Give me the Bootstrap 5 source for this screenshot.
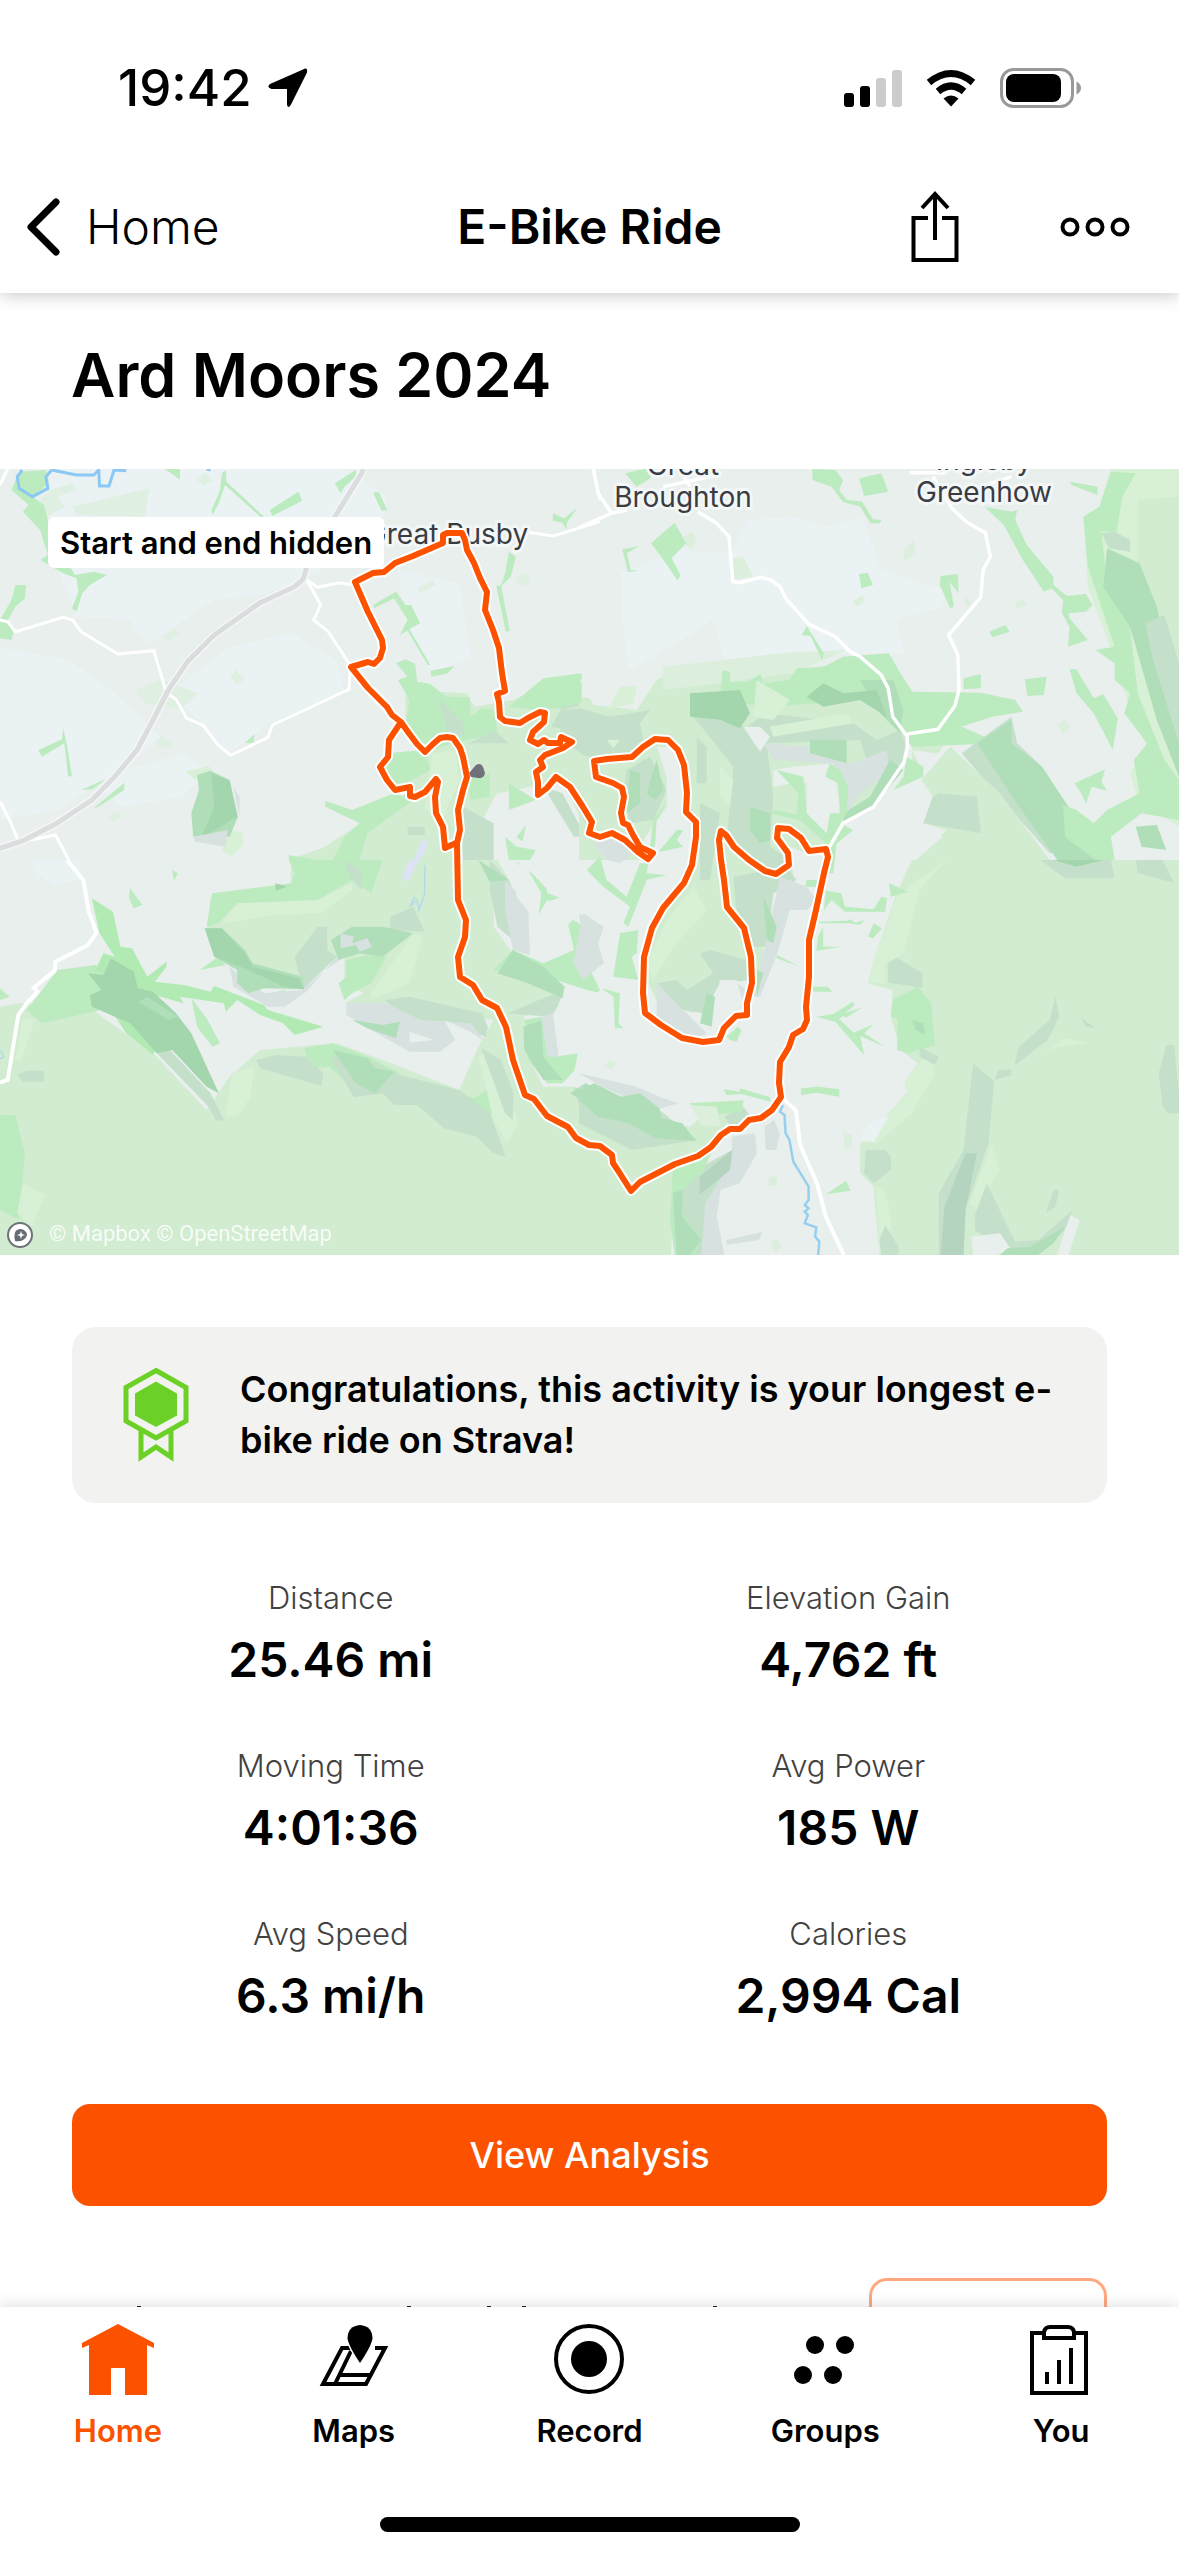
<!DOCTYPE html>
<html lang="en">
<head>
<meta charset="utf-8">
<meta name="viewport" content="width=device-width, initial-scale=1">
<title>E-Bike Ride</title>
<link href="https://cdn.jsdelivr.net/npm/bootstrap@5.3.0/dist/css/bootstrap.min.css" rel="stylesheet">
<style>
  body { font-family: Inter, "Liberation Sans", sans-serif; color: #000; background: #fff; }
  a { color: inherit; text-decoration: none; }
  svg { display: block; flex: none; }
  .app-header { box-shadow: 0 2px 16px rgba(0,0,0,.22); z-index: 2; }
  .status-row { height: 160px; padding: 16px 98px 0 118px; }
  .clock { font-size: 51px; line-height: 56px; font-weight: 500; }
  .top-row { height: 133px; padding: 0 26px; }
  .top-side { flex: 1 1 0; }
  .top-text { font-size: 48px; line-height: 56px; }
  .top-back { gap: 26px; font-weight: 300; }
  .top-name { font-weight: 600; }
  .top-actions { gap: 100px; }
  .top-actions .icon-button:last-child { margin-right: 22px; }
  .icon-button { border: 0; background: none; padding: 0; color: inherit; }
  .ride-title { font-size: 61px; line-height: 72px; font-weight: 600; padding: 46px 71px 58px; }
  .map-area { position: relative; }
  .map-area svg { width: 100%; height: auto; }
  .map-chip { position: absolute; left: 48px; top: 48px; height: 51px; line-height: 51px; padding: 0 12px;
    border-radius: 6px; background: #fff; font-size: 31px; font-weight: 600; }
  .page-body { padding: 72px 72px 0; }
  .congrats { background: #f2f2f0; border-radius: 24px; padding: 37px 48px; gap: 48px; font-size: 36px; line-height: 51px; font-weight: 600; }
  .stats { padding-top: 74px; row-gap: 55px; }
  .stat-label { font-size: 31px; line-height: 42px; font-weight: 300; color: #43423f; }
  .stat-value { font-size: 48px; line-height: 60px; padding-top: 11px; font-weight: 600; }
  .btn-orange { margin-top: 78px; height: 102px; border-radius: 18px; border: 0; background: #fc5200; color: #fff; font-size: 36px; font-weight: 500; }
  .btn-orange:hover { background: #e34a00; color: #fff; }
  .promo { margin-top: 72px; }
  .promo-button { width: 238px; height: 96px; border: 3px solid #ffa880; border-radius: 18px; background: #fff; }
  .tab-bar { box-shadow: 0 -2px 14px rgba(0,0,0,.12); z-index: 2; }
  .tab-link { padding-top: 17px; gap: 15px; font-size: 31px; line-height: 40px; font-weight: 600; }
  .tab-link.current { color: #fc5200; }
  .home-bar { width: 420px; height: 15px; border-radius: 8px; background: #000; margin: 66px auto 24px; }
  .thin path { vector-effect: non-scaling-stroke; }
  .place { font-family: Inter, sans-serif; font-size: 28px; fill: #3a3c44; stroke: #f3f7f7; stroke-width: 6px; paint-order: stroke; stroke-linejoin: round; text-anchor: middle; }
  .credit { font-family: Roboto, sans-serif; font-size: 22px; fill: #fff; fill-opacity: .85; }
  .lt { fill: #ebf2f3; } .pale { fill: #dcefdd; } .meadow { fill: #d1ecd0; } .lawn { fill: #d8f0d6; } .wood { fill: #bcebc0; }
  .bright { fill: #b1ebb3; } .deep { fill: #a4d6ae; } .mid { fill: #b0deb9; } .shade { fill: #c5e0ca; } .stone { fill: #d7e2e0; } .bare { fill: #e8efed; }
</style>
<script src="https://cdn.jsdelivr.net/npm/bootstrap@5.3.0/dist/js/bootstrap.bundle.min.js"></script>
</head>
<body class="vh-100 d-flex flex-column overflow-hidden">

<header class="app-header bg-white position-relative flex-shrink-0">
  <div class="status-row d-flex align-items-center justify-content-between">
    <div class="d-flex align-items-center">
      <span class="clock">19:42</span>
      <svg class="ms-3" width="40" height="40" viewBox="0 0 40 40"><path d="M35 1.500Q40-1.500 39 4.500L23 36.500Q20 41.500 19 36.500V21H3.500Q-2 19.500 2 16Z"/></svg>
    </div>
    <div class="d-flex align-items-center gap-4">
      <svg width="58" height="38" viewBox="0 0 58 38"><rect y="24" width="10" height="14" rx="3"/><rect x="16" y="17" width="10" height="21" rx="3"/><rect x="32" y="9" width="10" height="29" rx="3" fill="#ccc"/><rect x="48" y="1" width="10" height="37" rx="3" fill="#ccc"/></svg>
      <svg width="50" height="38" viewBox="0 0 50 38"><path d="M25 37.500 17.500 29.500Q25 23.500 32.500 29.500Z"/><g fill="none" stroke="#000" stroke-width="7"><path d="M12 22.500Q25 11.500 38 22.500"/><path d="M3 13.500Q25-4.500 47 13.500"/></g></svg>
      <svg width="81" height="40" viewBox="0 0 81 40"><rect x="1.500" y="1.500" width="71" height="37" rx="12" fill="none" stroke="#999" stroke-width="3"/><rect x="6" y="6" width="55" height="28" rx="8"/><path d="M76.500 13.500Q81 16 81 20T76.500 26.500Z" fill="#999"/></svg>
    </div>
  </div>
  <nav class="top-row d-flex align-items-center">
    <div class="top-side d-flex">
      <a href="#" class="top-back top-text d-flex align-items-center">
        <svg width="34" height="58" viewBox="0 0 34 58"><path d="M30 4 5 29 30 54" fill="none" stroke="#000" stroke-width="7" stroke-linecap="round" stroke-linejoin="round"/></svg>
        Home
      </a>
    </div>
    <div class="top-name top-text">E-Bike Ride</div>
    <div class="top-side top-actions d-flex align-items-center justify-content-end">
      <button class="icon-button" aria-label="Share"><svg width="48" height="72" viewBox="0 0 48 72" fill="none" stroke="#000" stroke-width="4"><path d="M17 27H2.500V69H45.500V27H31M24 49V3M11 17 24 3 37 17"/></svg></button>
      <button class="icon-button" aria-label="More"><svg width="72" height="22" viewBox="0 0 72 22" fill="none" stroke="#000" stroke-width="4"><circle cx="11" cy="11" r="7.500"/><circle cx="36" cy="11" r="7.500"/><circle cx="61" cy="11" r="7.500"/></svg></button>
    </div>
  </nav>
</header>

<main class="flex-fill overflow-hidden" style="min-height:0">
  <h1 class="ride-title m-0">Ard Moors 2024</h1>

  <section class="map-area" aria-label="Route map">
    <svg viewBox="0 469 1179 786" role="img" aria-label="Map of the ride">
      <rect y="469" width="1179" height="786" fill="#e8efed"/>

      <!-- north-west fields -->
      <g class="thin" transform="translate(0 460) scale(.38265 .33333)">
        <path class="lt" d="M130 27H900L1010 110 1000 200 830 340 700 400 560 420 380 560 340 480 200 470 150 330 130 180ZM0 560 180 600 300 700 420 830 350 900 150 1050 0 1080ZM440 700 600 560 760 520 880 600 900 690 700 790 600 880 520 780ZM1040 330 1200 370 1230 590 1130 640 1060 500ZM240 960 480 880 540 930 480 1010 320 1040Z"/>
        <path class="pale" d="M190 140 390 85 378 170 200 165ZM515 60 535 38 555 60 535 78ZM428 530 455 505 468 520 438 543ZM602 650 615 630 640 655 620 675ZM408 845 420 828 452 850 440 868 415 860ZM1090 385 1130 360 1140 375 1100 400ZM1350 355 1365 340 1385 350 1380 378 1350 372ZM280 1070 300 1055 318 1070 295 1085ZM130 90 190 70 200 90 150 110 170 140 130 165 90 140ZM355 690 420 660 520 700 470 750 380 730Z" opacity=".8"/>
        <path class="wood" d="M50 35 120 30 128 70 85 110 115 135 130 200 160 270 195 345 245 335 280 345 235 375 215 400 200 455 188 445 205 395 200 355 165 340 120 310 105 300 125 285 105 210 60 155 75 135 30 90ZM430 27H470V60L450 42ZM590 30 592 65 690 170 680 170 588 75 572 130 555 165 553 150 575 90 580 40ZM705 150 780 95 790 122 712 168ZM975 98 990 95 1012 150 997 152ZM40 375 68 375 65 415 40 440 18 485 35 515 30 540 55 560 30 540 0 535V480L30 420ZM165 805 176 860 188 948 178 950 168 850 110 890 100 870 162 838ZM640 850 665 822 662 848ZM212 990 275 958 265 970 240 988ZM245 1045 325 968 325 990 255 1042ZM875 70 930 30 930 50 900 80 890 100ZM975 435 1035 395 1060 435 1075 435 1098 490 1070 508 1125 615 1118 615 1065 512 1045 525 1065 480 1030 415 978 445ZM1125 632 1188 618 1170 640 1128 650ZM1330 275 1348 290 1335 350 1315 372 1310 380 1332 512 1322 515 1297 378 1310 375 1320 340ZM1445 160 1475 175 1510 142 1480 190 1482 210 1470 188 1445 182Z"/>
        <path class="meadow" d="M1060 690 1220 700 1240 740 1340 720 1400 690 1568 720V1000L1480 960 1300 1000 1200 1200H755L850 1160 980 1060 1060 1000 1000 960 1000 900 1060 880Z"/>
        <path class="bare" d="M1060 800 1110 880 1110 870 1010 880 1040 800ZM1290 1010 1400 1060 1450 1050 1540 1200H1290L1280 1100Z"/>
        <path class="wood" d="M1035 610 1060 598 1085 612 1090 665 1125 672 1165 710 1228 712 1230 770 1260 745 1290 750 1300 820 1180 850 1110 880 1060 800 1070 720 1040 660 1065 650ZM1330 740 1420 655 1520 640 1520 740 1400 750ZM1010 880 1110 870 1125 930 1060 970 1005 970ZM850 1022 920 1050 1030 1000 1080 1020 960 1120 940 1200H870L900 1130 940 1090 850 1040ZM1220 960 1280 940 1280 1010 1230 1020ZM1330 970 1400 1020 1330 1050ZM1350 1130 1375 1095 1365 1145ZM1320 1130 1350 1160 1400 1170 1385 1200H1330ZM755 1185 830 1200H755Z"/>
        <path class="shade" d="M1145 712 1210 790 1215 830 1170 820ZM1225 850 1290 810 1330 850ZM1470 740 1568 720V890L1510 870 1490 810 1440 800ZM1065 1100H1110V1125H1065ZM1210 1040 1290 1090 1290 1200H1210ZM1420 980 1470 1000 1530 1130 1500 1130Z"/>
        <path class="lawn" d="M485 935 545 918 555 930 510 960ZM1130 880 1190 870 1200 960 1150 1100 1110 1040ZM600 1110 635 1120 635 1155 605 1190 580 1170Z"/>
        <path class="mid" d="M515 945 550 932 600 960 622 1070 600 1130 505 1130 500 1060 520 990Z"/><path class="deep" d="M552 940 600 962 620 1070 525 1135 560 1040Z"/><path class="stone" d="M505 1130 595 1110 590 1160 510 1145ZM610 980 626 1010V1070Z"/>
        <path d="M1105 1140 1120 1145 1100 1200H1080Z" fill="#dde2f4"/>
        <g fill="none" stroke="#fff" stroke-width="3">
          <path d="M0 75 20 27M0 480 20 485 40 515 165 472 190 480 212 515 308 582 402 572 435 700 460 718 488 775 530 795 570 855 603 886 700 832 712 795 912 688 915 630M802 360 838 435 820 480 858 515 912 610M802 360 830 382 885 368 925 375M1550 27 1568 120M0 1025 25 1080 45 1135M80 1140 145 1125 180 1200M1370 215 1445 228 1568 185"/>
        </g>
        <g fill="none" stroke="#8cc8f5" stroke-width="3"><path d="M135 30 120 50 125 85 85 110 50 85 45 50 58 30M135 30 200 45 245 45 258 30 260 78 285 78 298 30 330 32M540 27 550 30"/></g>
        <path d="M0 1165 60 1142 145 1092 240 1020 300 950 358 870 400 780 440 690 490 605 560 525 680 428 770 380 792 358 802 320 870 180 945 40 950 27" fill="none" stroke="#f4f6f7" stroke-width="8"/>
        <path d="M0 1165 60 1142 145 1092 240 1020 300 950 358 870 400 780 440 690 490 605 560 525 680 428 770 380 792 358 802 320 870 180 945 40 950 27" fill="none" stroke="#dadcdd" stroke-width="5"/>
      </g>

      <!-- north-east fields and moor edge -->
      <g class="thin" transform="translate(579 460) scale(.38265 .33333)">
        <path class="lt" d="M110 340 260 270 400 280 420 220 440 180 560 170 640 200 740 170 790 330 960 390 950 440 830 480 850 580 720 580 380 600 350 480 240 560 130 630 110 450Z"/>
        <path class="meadow" d="M0 730 60 700 150 690 220 650 550 640 800 580 870 690 950 860 900 950 870 900 870 800 800 1000 690 1090 650 1160 500 1040 340 1000 300 1200H0Z"/>
        <path class="pale" d="M220 620 540 578 700 570 560 640 400 665 220 690ZM403 295 430 290 455 350 403 360ZM848 275 875 240 880 280 850 305ZM715 425 740 405 748 425 725 440ZM1140 430 1160 418 1172 435 1145 445ZM1250 795 1268 778 1285 800 1265 822ZM270 235 295 215 308 245 290 270ZM1005 405 1025 430 1015 440Z"/>
        <path class="wood" d="M120 40 170 27H210L180 60 150 80ZM610 27 670 30 690 60 680 90 700 120 740 125 768 178 792 180 785 190H762L735 140 690 125 660 80 610 60ZM732 55 790 40 808 95 745 108ZM188 250 250 188 280 250 242 295 265 345 258 362 215 290ZM113 268 158 258 125 280 135 330 158 332 128 336ZM582 525 595 498 610 525 640 580 635 600 605 528ZM732 342 755 338 768 375 738 385ZM945 348 990 342 992 400 968 365 980 440 970 445 943 375ZM1072 515 1115 495 1125 515 1080 532ZM1060 140 1130 155 1145 150 1140 180 1170 255 1240 350 1240 375 1275 408 1325 402 1342 435 1325 455 1280 460 1282 475 1330 540 1278 560 1282 500 1262 460 1265 420 1235 385 1215 395 1160 300 1110 195ZM1285 65 1355 80 1355 105 1287 75ZM1005 655 1050 642 1050 685 1005 688ZM1165 658 1222 650 1215 705 1172 708ZM1282 628 1300 628 1345 715 1370 703 1408 775 1395 870 1345 760 1300 700ZM1295 970 1375 928 1365 965 1380 992 1340 980 1325 1030 1310 995ZM0 640 8 680 0 690ZM375 630 395 635 395 665 440 665 475 642 480 670 550 660 570 625 640 620 690 590 810 580 835 630 870 695 1050 698 1140 720 1160 755 1080 770 1000 800 1100 850 870 860 820 780 740 700 600 740 440 800 420 760 370 700Z"/>
        <path class="shade" d="M1000 880 1130 770 1145 850 1210 920 1290 1060 1330 1180H1230L1060 960ZM925 1010 1040 1000 1050 1120 900 1090Z"/>
        <path class="meadow" d="M970 860 1100 1000 1230 1200H880L950 1130 900 1090 925 1010 895 960Z"/>
        <path class="bare" d="M870 870 930 880 960 870 900 950 820 1000 780 1040 690 1140 680 1200H880L960 1110 900 1090 920 1010 890 960 900 940Z"/>
        <path class="shade" d="M925 1010 940 1000 1040 1010 1050 1120 900 1090Z"/>
        <path class="mid" d="M1040 850 1130 780 1130 850 1210 920 1290 1060 1350 1200H1250L1150 1040Z"/>
        <path class="lawn" d="M1390 27H1568V1100L1460 1020 1440 940 1485 860 1440 750 1400 600 1330 380 1318 170 1360 140Z"/>
        <path class="meadow" d="M1460 120 1568 110V700L1530 560 1470 430 1460 300Z"/>
        <path class="wood" d="M1360 140 1318 170 1330 320 1400 560 1350 570 1400 610 1400 660 1440 700 1425 760 1485 850 1450 900 1465 1000 1380 1050 1345 1090 1300 1050 1265 1035 1270 1130 1350 1200H1400L1390 1130 1470 1060 1568 1080V960L1530 900 1460 700 1440 500 1380 370 1365 215 1405 215 1420 110 1455 40 1390 35Z"/>
        <path class="mid" d="M1380 265 1465 310 1510 440 1535 560 1568 690V950L1510 780 1440 500 1370 380ZM1455 1100 1510 1095 1535 1170 1470 1160Z"/>
        <path class="shade" d="M1480 490 1530 465 1568 610V850L1500 600ZM1365 220 1400 215 1440 240 1440 275 1385 265Z"/>
      </g>

      <!-- south-west moor -->
      <g class="thin" transform="translate(0 860) scale(.38265 .33333)">
        <path class="lt" d="M85 0H210V60L140 75 95 40Z"/>
        <path class="meadow" d="M0 440 50 430 230 440 400 580 540 750 600 650 680 570 880 550 1000 600 1200 690 1250 560 1290 480 1050 440 900 430 950 400 900 370 900 290 780 350 600 320 540 220 550 110 760 70V0H1300L1330 60 1290 100 1290 200 1340 280 1480 380 1440 430 1370 470 1370 570 1420 680 1500 680 1568 760V1185H0Z"/>
        <path class="wood" d="M755 0H1000L970 100 920 60 830 120 620 130 570 190 540 200 555 100 760 70 770 40ZM70 450 150 330 250 315 360 400 300 440 110 490ZM0 765H40L65 880 50 1080 0 1050ZM500 415 540 475 575 550 555 560 515 500ZM905 300 960 285 1010 290 970 370 920 400 900 420 885 370 905 350ZM1190 740 1210 705 1240 715 1280 685 1300 710 1290 760 1260 770ZM795 565 870 550 960 590 1045 640 980 700 900 660 860 620 810 625ZM340 85 372 135 350 145 337 115ZM522 330 570 290 590 315ZM1345 0 1390 40 1440 100 1470 110 1430 125 1405 190 1415 100 1385 50ZM1290 330 1340 270 1420 310 1500 270 1480 170 1530 200 1530 300 1568 390 1560 400 1480 370 1420 350ZM1370 480 1415 470 1450 590 1510 580 1510 620 1470 670 1430 670 1380 600ZM0 385 25 410 0 420ZM705 400 745 390 748 425 705 420ZM450 30 465 40 455 62Z"/>
        <path class="bright" d="M240 115 295 155 315 260 345 265 385 350 435 305 435 320 405 365 480 375 550 395 560 378 690 435 700 450 845 500 770 525 740 490 680 465 620 420 590 455 585 430 470 410 480 430 420 410 360 400 250 330 270 280 300 290 260 220ZM290 450 350 490 410 560 400 585 330 520Z"/>
        <path class="lawn" d="M620 130 830 120 920 70 920 90 840 160 720 165 580 190ZM605 640 665 620 655 710 620 770 590 770ZM60 470 90 480 55 605 40 600ZM60 970 118 1005 85 1100 45 1060ZM1250 590 1270 570 1310 640 1355 790 1325 850 1290 780ZM970 400 1080 220 1105 230 1070 370 970 420Z"/>
        <path class="shade" d="M780 340 770 290 830 200H855V270L880 290 790 390ZM1020 170 1080 140 1110 215 1020 210ZM670 600 720 585 800 590 845 640 840 678 680 625ZM860 590 960 600 1045 645 1200 690 1280 760 1322 890 1290 880 1245 830 1160 805 1090 735 1030 735 1000 700 925 712ZM1005 420 1070 410 1260 460 1275 500 1270 530 1060 470ZM410 580 440 565 550 700 585 780 565 782 545 740ZM1258 565 1310 600 1342 700 1340 780 1320 760ZM1280 0 1330 60 1380 180 1380 280 1300 200 1280 90ZM1325 460 1440 405 1480 400 1440 470ZM45 645 70 632 115 632V665H60ZM1500 680 1568 720V790L1520 770ZM895 0 945 30V90L920 60Z"/>
        <path class="stone" d="M905 430 1010 430 1100 480 1230 490 1265 540 1190 540 1150 575H1070L1000 530 905 465ZM600 320 690 400 790 390 850 330 900 290 880 290 800 395 745 440 700 440 610 380ZM1320 60 1380 130 1385 285 1340 270 1320 150ZM1415 470 1445 460 1460 590 1430 590Z"/>
        <path class="bare" d="M1070 515 1135 540 1070 548ZM1160 480 1230 515 1260 540 1200 560ZM1395 190 1430 120 1520 150 1480 200 1420 220 1420 270 1390 280ZM1460 430 1480 375 1568 400V650L1500 640 1510 580 1460 580ZM1340 20 1370 10 1410 90 1400 180 1350 110ZM1420 30H1568V190L1480 120 1430 100Z"/>
        <path class="mid" d="M535 205 580 205 640 270 660 310 790 350 795 388 690 385 650 400 620 370 620 330 560 290ZM865 240 920 200 1000 200 1080 220 1000 290 940 280 885 300ZM870 570 960 595 980 625 1030 635 980 700 930 670ZM1340 270 1420 320 1475 380 1470 415 1380 370 1300 340ZM1368 500 1415 480 1420 590 1470 660 1420 660 1370 570ZM920 480 1000 495 1045 485 1035 535 960 505ZM1490 700 1530 670 1568 690V750ZM1250 0 1330 60 1280 65Z"/>
        <path class="deep" d="M230 340 270 345 290 295 350 335 360 385 400 395 460 460 500 520 572 700 540 680 450 570 410 580 340 490 240 440 235 405 265 390ZM535 205 580 205 640 280 660 320 780 355 795 388 740 380 650 330 560 290ZM720 70 750 80 720 92Z"/>
        <path class="stone" d="M890 220 925 230 920 250 960 235 972 260 940 275 930 255 890 265Z"/>
        <path class="mid" d="M362 425 385 410 465 470 440 480Z"/>
        <path d="M1070 0H1095L1065 65 1050 55Z" fill="#dde2f4"/>
        <path d="M1110 15V100L1095 150 1090 120 1070 140 1085 110M0 570 10 590 0 597" fill="none" stroke="#b5dbe8" stroke-width="1.500"/>
        <path d="M175 0 218 60 232 155 252 218 230 255 145 305 143 332 88 383 98 395 70 430 48 465 20 660 0 668" fill="none" stroke="#fff" stroke-width="4"/>
      </g>

      <!-- south-east moor and valley -->
      <g class="thin" transform="translate(579 860) scale(.38265 .33333)">
        <path class="meadow" d="M870 0H1568V1185H785L770 980 735 940 735 850 780 800 870 680 850 670 885 610 840 570 815 470 820 390 755 370 770 300 800 200 830 100ZM0 720 110 770 290 800 330 760 290 730 430 720 340 870 250 930 240 1185H0Z"/>
        <path class="lawn" d="M860 80 960 0 890 90 850 280 800 310 800 370 755 370 770 300 830 110ZM885 610 930 580 930 640 870 760 780 850 735 850 860 700 850 670ZM775 980 800 990 815 1080V1185H785ZM1080 850 1100 930 1070 980 1050 1060 1020 1030ZM1215 580 1270 535 1335 550 1250 560Z"/>
        <path class="shade" d="M808 310 830 293 898 340V383L808 368ZM1030 610 1085 665 1070 850 1010 1050 1005 1185H940V1000L1005 870ZM1140 600 1150 560 1230 480 1245 410 1255 470 1225 540 1140 615ZM1085 660 1095 632 1130 628 1130 645ZM750 870 800 870 815 890V930L770 970 745 940ZM1065 970 1140 1145 1200 1140 1290 1050 1270 1110 1200 1185H1130L1035 1110V1065ZM1515 640 1535 555 1555 555 1568 700V760H1540L1525 740ZM1310 470 1350 505 1325 500ZM1220 1060 1240 990H1255L1245 1040ZM1205 0H1390L1400 55H1270ZM1455 0H1525L1555 68 1460 40ZM890 560 940 590 930 615 890 590ZM785 1140 800 1095 835 1160V1185H790ZM320 920 400 870 430 900 370 980 350 1080 320 1185H250L270 960ZM0 680 60 690 210 750 310 840 140 870 0 790ZM380 770 430 740 460 790 400 810Z"/>
        <path class="stone" d="M400 830 460 820 465 880 420 970 370 990 360 1070 380 1185H320L330 1030 400 900ZM485 800 510 780 525 820 515 870H488ZM385 1140 480 1115 470 1140 385 1155ZM0 640 150 680 210 710 260 730 200 750 60 680ZM0 160 65 200 50 250 65 310 20 330Z"/>
        <path class="bare" d="M1025 1130 1100 1120 1130 1170 1090 1185H1030ZM1285 1065 1308 1080 1280 1185H1250L1270 1110Z"/>
        <path class="wood" d="M625 230 638 200V260L685 260 620 272ZM645 92 685 100 695 140 770 148 790 110 805 115 800 155 695 155 660 120 640 150ZM810 70 860 95 815 110ZM628 185 700 182 710 178 722 188 745 180 735 195 705 190 630 190ZM755 230 770 190 792 205 768 235ZM612 380H650L662 395H612ZM620 470 665 462 715 425 720 435 695 460 740 442 700 472 688 468 680 478 718 518 770 492 745 520 800 560 735 528 745 585 670 485ZM820 420 885 380 920 430 930 555 860 580 832 570 832 475 815 470ZM580 685 625 680 680 688V710L620 698 580 705ZM378 688 420 695 420 685 500 712 500 725 425 702 385 705ZM645 1003 698 962 710 992ZM245 930 320 900 350 870 320 940 270 990 270 1060 320 1140 300 1185H250L238 1080ZM290 730 430 722 425 755 345 765 370 800 330 790ZM395 540 412 545 425 510 415 500 385 530Z"/>
        <path class="pale" d="M690 815 715 825 712 860 695 872ZM495 950H518V978H495ZM500 1145 520 1135 528 1160 515 1180ZM80 598 98 610 85 628 65 620ZM290 735 360 740 370 800 320 795Z"/>
        <path class="mid" d="M0 690 40 670 110 710 160 700 210 745 215 775 270 790 305 843 200 835 130 790 50 770 0 720ZM870 480 900 490 905 525 880 510ZM245 1000 270 990 270 1070 320 1140 290 1185H255ZM1120 1165 1180 1160 1270 1100 1240 1150 1200 1185H1100Z"/>
        <path class="deep" d="M1240 0H1370L1300 20Z"/>
        <path class="lt" d="M740 820 770 780 810 770 770 845 735 840Z"/>
        <path d="M1040 880 1010 1050 1005 1185H945L955 1040 1010 880ZM315 950 400 870 395 930 315 1005Z" fill="#b5d4bf"/>
        <path d="M533 735 525 755 537 765 540 820 550 840 560 905 600 980V1020L590 1035 600 1045 590 1055 598 1065 590 1090 620 1102 617 1130 628 1145 625 1185" fill="none" stroke="#97cff0" stroke-width="2.500"/>
        <path d="M530 712 567 752 578 855 622 970 645 1070 692 1185" fill="none" stroke="#fff" stroke-width="4"/>
      </g>

      <!-- central ridges inside the route -->
      <g transform="translate(560 680) scale(.33333)">
        <path class="meadow" d="M0 90 140 60 390 50 620 80 900 60 1020 150 1040 200 1010 290 930 385 840 430 800 500 740 520 690 600 610 640 610 900 480 900 400 1000 290 960 240 860 300 720 400 560 410 430 370 400 330 190 220 240 190 420 90 470 0 290Z"/>
        <path class="shade" d="M0 90 60 85 150 110 270 90 240 130 250 180 180 240 80 230 0 180ZM400 110 470 120 560 140 620 100 880 130 950 180 1020 150 1040 200 1020 270 940 300 900 180 620 190 640 350 630 500 690 540 640 590 560 550 500 480 520 260ZM410 170 440 200V310H410ZM420 370 480 400 450 600H420ZM520 590 680 560 710 600 640 640 620 800 560 800 530 700ZM420 820 450 810 560 840 570 900 480 910 430 1000 370 990 290 910 350 900 380 930 460 880ZM200 270 270 230 320 330 280 420 210 430 190 330ZM0 290 90 420 90 470 180 460 120 500 60 400Z"/>
        <path class="stone" d="M610 190 750 200 880 250 980 210 990 280 900 340 860 400 860 310 800 250 640 240ZM660 590 740 620 770 660 740 690 690 690 660 800 600 950 580 950 610 820ZM290 910 440 1060 400 1080 290 1020ZM100 490 160 470 230 510 180 550 140 540ZM70 700 130 740 110 800 130 850 70 900 40 850ZM490 900 520 900 570 940V990L500 970Z"/>
        <path class="bare" d="M550 140 600 140 630 170 600 215ZM290 200 340 200 390 400 400 560 300 720 240 870 170 900 240 560 250 480 320 380 320 290ZM640 270 700 260 820 250 840 380 830 450 780 470 740 400 740 310 700 310 640 320ZM690 500 740 520 800 510 780 620 700 590ZM690 690 740 690 740 850 600 960 640 860ZM480 900 530 900 550 970 480 1060 450 1050ZM60 0H290L230 90 100 75Z"/>
        <path class="mid" d="M750 180 860 180 860 250 750 220ZM610 650 650 740 640 790 620 780ZM570 380 630 400 630 480 600 490 570 450ZM990 240 1030 270 940 380 850 430 850 400 930 350ZM210 270 240 280 240 370 200 400ZM290 240 310 330 285 360 260 340ZM590 870 610 880 590 950ZM440 940 465 950 455 1040 420 1030ZM900 0H1000L1030 90 1020 160 960 100Z"/>
        <path class="deep" d="M390 40 540 30 570 100 540 145 480 120 390 110ZM740 50 790 10 850 40 950 30 980 110 900 60 790 80Z"/>
        <path class="wood" d="M650 270 730 290 740 400 800 460 810 400 840 400 835 310 795 290 810 250 840 270 865 320 860 400 840 430 880 450 830 490 820 580 800 580 810 500 720 420 630 400 650 390 710 405 715 340ZM80 570 120 530 140 600 200 650 240 550 265 550 260 580 320 585 260 600 205 740 190 730 210 680 130 620ZM180 760 235 750 230 820 215 830 235 900 160 890ZM125 925 180 940 175 1030 190 1045 165 1045 160 950ZM320 370 290 420 285 500 270 500 280 420ZM300 510 350 450 370 450 350 480 370 500 300 515ZM650 825 720 860 650 835ZM740 600H770V620H735ZM1040 230 1090 260 1090 290 1000 330 1030 290Z"/>
        <path class="lawn" d="M590 0 690 60 640 120 580 110ZM160 60 180 20 230 20 220 70 140 90ZM140 180 180 180 160 205ZM630 140 860 100 880 130 640 170ZM480 260 520 300 510 380 480 350ZM400 620 440 690 340 800 280 900 260 850 320 720Z"/>
      </g>
      <g class="thin" transform="translate(579 460) scale(.38265 .33333)" fill="none" stroke="#fff" stroke-width="3.500"><path d="M38 27 50 100 85 160 0 203M85 160 125 150M310 155 358 188 392 230 402 365 420 368 475 352 502 360 525 380 540 415 600 492 670 530 708 575 735 590 790 645 808 685 820 770 858 830 858 860 850 905 770 1040 690 1090 655 1160M858 822 938 808 982 738 993 690 990 585 966 525 1050 412 1056 330 1075 290 1062 218 1015 188 975 145 925 50M865 38H960M220 80 280 65 360 45M275 50 290 80M1050 80 1130 50"/></g>

      <g class="place"><text x="683" y="475">Great</text><text x="683" y="507">Broughton</text><text x="984" y="470">Ingleby</text><text x="984" y="502">Greenhow</text><text x="447" y="544">Great Busby</text></g>

      <!-- recorded route with its halo -->
      <defs><path id="route" d="M467 777 463 757 460 748 453 738 447 737 440 738 433 744 425 752 417 744 408 732 401 722 392 715 387 707 368 688 351 667 368 662 374 664 380 658 383 648 382 640 368 612 355 582 373 573 384 572 395 563 413 556 443 543 443 535 447 533H462L465 540 467 550 474 563 480 578 487 592 485 610 493 630 499 648 502 673 505 691 497 694 499 702 500 717 505 721 520 723 528 718 540 712 545 713 544 722 533 732 530 740 538 744 544 740 548 743 560 743 561 737 572 742 563 748 545 755 540 760 543 767 536 772 538 782V795L547 788 556 777 570 787 583 807 592 822 589 833 600 837 612 833 625 840 638 852 648 859 653 853 640 847 633 835 628 825 623 823 621 813 624 797 622 788 613 783 596 777 594 761 607 759 632 757 643 747 655 739 668 740 678 750 684 765 687 793 686 812 696 822V837L692 865 684 883 663 908 652 928 644 957 643 993 645 1013 661 1025 682 1038 703 1042 719 1040 724 1028 736 1016 747 1015V1003L752 983 751 957 744 928 727 907 724 880 721 860 719 840 721 831 726 835 734 847 749 860 765 871 776 874 789 865 788 853 777 838 778 828 789 829 801 838 809 851 826 849 828 857 824 873 816 910 809 940V977L806 1007 807 1020 803 1029 793 1035 789 1047 780 1062 779 1083 781 1097 772 1110 761 1118 749 1120 740 1129H730L721 1135 711 1147 698 1156 675 1164 640 1182 631 1191 619 1172 613 1163 612 1155 600 1146 589 1145 576 1138 568 1127 547 1116 534 1099 525 1095 513 1060 506 1027 497 1008 482 1000 473 985 460 977 458 957 465 937 466 920 458 900 457 843 460 830 458 810 463 790ZM401 722 389 740 388 757 380 767 387 780 395 790 410 787V796L415 797 425 792 436 779 438 782 435 797 436 813 443 827 445 848 456 843"/></defs>
      <g fill="none" stroke-linecap="round" stroke-linejoin="round"><use href="#route" stroke="#fff" stroke-width="10"/><use href="#route" stroke="#fc5200" stroke-width="6"/></g>
      <path d="M469 773 476 765Q481 762 483 767L485 773Q484 779 478 778L471 777Z" fill="#71717c"/>

      <circle cx="20" cy="1235" r="12" fill="#fff" stroke="#6d7178" stroke-width="2"/><path d="M15 1241Q13 1231 18 1229.500T26 1232 23 1240Q20 1242 15 1241Z" fill="#666a72"/><path d="M21 1231 22 1234 25 1235 22 1236 21 1239 20 1236 17 1235 20 1234Z" fill="#fff"/>
      <text class="credit" x="49" y="1241">© Mapbox © OpenStreetMap</text>
    </svg>
    <div class="map-chip">Start and end hidden</div>
  </section>

  <div class="page-body">
    <div class="congrats d-flex align-items-center">
      <svg width="72" height="96" viewBox="0 0 72 96" fill="none" stroke="#6cd127" stroke-width="5"><path d="M36 3.500 66 20.500V54L36 71 6 54V20.500ZM21 62V90L36 80 51 90V62"/><path d="M36 14.500 57 26.500V48.500L36 60 15 48.500V26.500Z" fill="#6cd127" stroke="none"/></svg>
      <div>Congratulations, this activity is your longest e-<br>bike ride on Strava!</div>
    </div>

    <div class="stats row gx-0 text-center">
      <div class="col-6"><div class="stat-label">Distance</div><div class="stat-value">25.46 mi</div></div>
      <div class="col-6"><div class="stat-label">Elevation Gain</div><div class="stat-value">4,762 ft</div></div>
      <div class="col-6"><div class="stat-label">Moving Time</div><div class="stat-value">4:01:36</div></div>
      <div class="col-6"><div class="stat-label">Avg Power</div><div class="stat-value">185 W</div></div>
      <div class="col-6"><div class="stat-label">Avg Speed</div><div class="stat-value">6.3 mi/h</div></div>
      <div class="col-6"><div class="stat-label">Calories</div><div class="stat-value">2,994 Cal</div></div>
    </div>

    <button class="btn btn-orange w-100">View Analysis</button>

    <div class="promo d-flex justify-content-between align-items-start">
      <svg width="720" height="40" viewBox="0 0 720 40" fill="#222"><path d="M65 28h4v2h-4zM335 28h4v2h-4zM415 28h4v2h-4zM450 28h4v2h-4zM641 28h4v2h-4z"/></svg>
      <button class="promo-button" aria-label="Subscribe"></button>
    </div>
  </div>
</main>

<footer class="tab-bar bg-white position-relative flex-shrink-0">
  <nav class="row row-cols-5 gx-0 text-center">
    <a href="#" class="tab-link current col d-flex flex-column align-items-center"><svg width="72" height="72" viewBox="0 0 72 72" fill="#fc5200"><path d="M36 0 72 19V24L65 21V71H43V44H29V71H7V21L0 24V19Z"/></svg>Home</a>
    <a href="#" class="tab-link col d-flex flex-column align-items-center"><svg width="72" height="72" viewBox="0 0 72 72"><path d="M34 24H24L5 60H48L67 24H57M33 27 17 60M21 51H52" fill="none" stroke="#000" stroke-width="4"/><path d="M42 1Q54 2 54.500 14 54 21 42 39 30 21 29.500 14 30 2 42 1Z" stroke="#fff" stroke-width="3" paint-order="stroke"/></svg>Maps</a>
    <a href="#" class="tab-link col d-flex flex-column align-items-center"><svg width="72" height="72" viewBox="0 0 72 72"><circle cx="36" cy="35" r="33" fill="none" stroke="#000" stroke-width="4"/><circle cx="36" cy="35" r="18"/></svg>Record</a>
    <a href="#" class="tab-link col d-flex flex-column align-items-center"><svg width="72" height="72" viewBox="0 0 72 72"><circle cx="26" cy="21" r="9"/><circle cx="56" cy="21" r="9"/><circle cx="14" cy="51" r="9"/><circle cx="44" cy="51" r="9"/></svg>Groups</a>
    <a href="#" class="tab-link col d-flex flex-column align-items-center"><svg width="72" height="72" viewBox="0 0 72 72" fill="none" stroke="#000" stroke-width="4"><path d="M20 9H7V69H61V9H49M19 14V8Q20 3 25 3H43Q48 3 49 8V14ZM22 48V60M34 36V60M46 24V60"/></svg>You</a>
  </nav>
  <div class="home-bar"></div>
</footer>
</body>
</html>
